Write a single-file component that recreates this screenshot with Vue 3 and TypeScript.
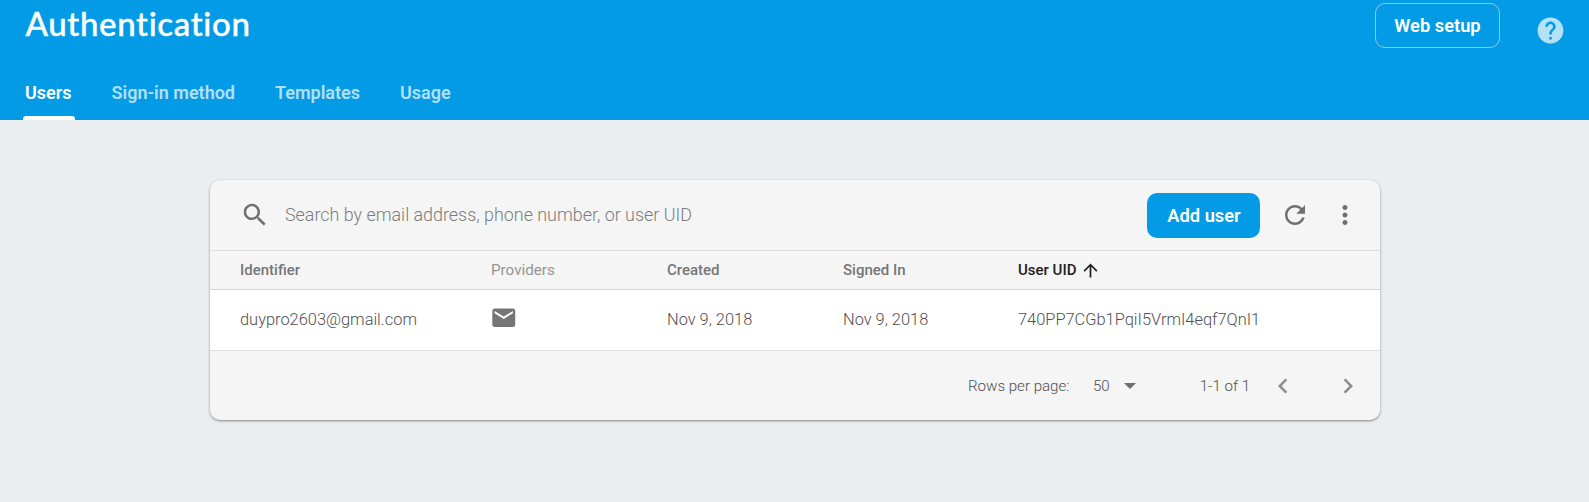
<script setup lang="ts">
import { ref } from 'vue'

interface Column {
  label: string
  state?: 'muted' | 'sorted'
}

interface UserRow {
  identifier: string
  created: string
  signedIn: string
  uid: string
}

const tabs: string[] = ['Users', 'Sign-in method', 'Templates', 'Usage']
const activeTab = ref('Users')

const columns: Column[] = [
  { label: 'Identifier' },
  { label: 'Providers', state: 'muted' },
  { label: 'Created' },
  { label: 'Signed In' },
  { label: 'User UID', state: 'sorted' },
]

const users: UserRow[] = [
  {
    identifier: 'duypro2603@gmail.com',
    created: 'Nov 9, 2018',
    signedIn: 'Nov 9, 2018',
    uid: '740PP7CGb1PqiI5VrmI4eqf7QnI1',
  },
]
</script>

<template>
  <div class="page">
    <header class="header">
      <div class="title-bar">
        <h1 class="title">Authentication</h1>
        <div class="header-actions">
          <button class="btn outline">Web setup</button>
          <svg class="help" viewBox="0 0 24 24">
            <path d="M12 2C6.48 2 2 6.48 2 12s4.48 10 10 10 10-4.48 10-10S17.52 2 12 2zm1 17h-2v-2h2v2zm2.07-7.75l-.9.92C13.45 12.9 13 13.5 13 15h-2v-.5c0-1.1.45-2.1 1.17-2.83l1.24-1.26c.37-.36.59-.86.59-1.41 0-1.1-.9-2-2-2s-2 .9-2 2H8c0-2.21 1.79-4 4-4s4 1.79 4 4c0 .88-.36 1.68-.93 2.25z" />
          </svg>
        </div>
      </div>
      <nav class="tabs">
        <a
          v-for="tab in tabs"
          :key="tab"
          class="tab"
          :class="{ active: tab === activeTab }"
          @click="activeTab = tab"
        >{{ tab }}</a>
      </nav>
    </header>

    <main class="card">
      <div class="toolbar">
        <svg class="icon" viewBox="0 0 24 24">
          <path d="M15.5 14h-.79l-.28-.27C15.41 12.59 16 11.11 16 9.5 16 5.91 13.09 3 9.5 3S3 5.91 3 9.5 5.91 16 9.5 16c1.61 0 3.09-.59 4.23-1.57l.27.28v.79l5 4.99L20.49 19l-4.99-5zm-6 0C7.01 14 5 11.99 5 9.5S7.01 5 9.5 5 14 7.01 14 9.5 11.99 14 9.5 14z" />
        </svg>
        <input class="search" placeholder="Search by email address, phone number, or user UID" />
        <button class="btn primary">Add user</button>
        <svg class="icon refresh" viewBox="0 0 24 24">
          <path d="M17.65 6.35C16.2 4.9 14.21 4 12 4c-4.42 0-7.99 3.58-7.99 8s3.57 8 7.99 8c3.73 0 6.84-2.55 7.73-6h-2.08c-.82 2.33-3.04 4-5.65 4-3.31 0-6-2.69-6-6s2.69-6 6-6c1.66 0 3.14.69 4.22 1.78L13 11h7V4l-2.35 2.35z" />
        </svg>
        <svg class="icon more" viewBox="0 0 24 24">
          <path d="M12 8c1.1 0 2-.9 2-2s-.9-2-2-2-2 .9-2 2 .9 2 2 2zm0 2c-1.1 0-2 .9-2 2s.9 2 2 2 2-.9 2-2-.9-2-2-2zm0 6c-1.1 0-2 .9-2 2s.9 2 2 2 2-.9 2-2-.9-2-2-2z" />
        </svg>
      </div>

      <div class="row head">
        <div v-for="col in columns" :key="col.label" class="th" :class="col.state">
          {{ col.label }}
          <svg v-if="col.state === 'sorted'" class="sort" viewBox="0 0 24 24">
            <path d="M4 12l1.41 1.41L11 7.83V20h2V7.83l5.58 5.59L20 12l-8-8-8 8z" />
          </svg>
        </div>
      </div>

      <div v-for="user in users" :key="user.uid" class="row body">
        <div class="id">{{ user.identifier }}</div>
        <div class="provider">
          <svg class="mail" viewBox="0 0 24 24">
            <path d="M20 4H4c-1.1 0-1.99.9-1.99 2L2 18c0 1.1.9 2 2 2h16c1.1 0 2-.9 2-2V6c0-1.1-.9-2-2-2zm0 4l-8 5-8-5V6l8 5 8-5v2z" />
          </svg>
        </div>
        <div>{{ user.created }}</div>
        <div>{{ user.signedIn }}</div>
        <div class="uid">{{ user.uid }}</div>
      </div>

      <footer class="footer">
        <span class="rows-label">Rows per page:</span>
        <span class="rows-size">50</span>
        <svg class="caret" viewBox="0 0 12 6"><path d="M0 0h12l-6 6z" /></svg>
        <span class="range">1-1 of 1</span>
        <svg class="icon chevron" viewBox="0 0 24 24">
          <path d="M15.41 7.41L14 6l-6 6 6 6 1.41-1.41L10.83 12z" />
        </svg>
        <svg class="icon chevron next" viewBox="0 0 24 24">
          <path d="M10 6L8.59 7.41 13.17 12l-4.58 4.59L10 18l6-6z" />
        </svg>
      </footer>
    </main>
  </div>
</template>

<style>
body {
  background: #eaeef1;
}
</style>

<style scoped>
.page {
  min-height: 502px;
  font-family: Roboto, 'Liberation Sans', sans-serif;
  background: #eaeef1;
  overflow: hidden;
}

.page * {
  box-sizing: border-box;
}

.header {
  height: 120px;
  background: #039be5;
  color: #fff;
  display: flex;
  flex-direction: column;
  justify-content: space-between;
}

.title-bar {
  display: flex;
  justify-content: space-between;
  padding: 0 23px 0 25.5px;
}

.title {
  margin: 3px 0 0;
  font: 500 33px/41px Lato, Roboto, sans-serif;
  letter-spacing: 0.65px;
  -webkit-text-stroke: 0.4px #fff;
}

.header-actions {
  display: flex;
  align-items: flex-start;
  padding-top: 3px;
}

.btn {
  height: 45px;
  padding: 1px 0 0 1px;
  border: 0;
  border-radius: 10px;
  font: 600 18.3px/44px Roboto, sans-serif;
  color: #fff;
  white-space: nowrap;
}

.outline {
  width: 125px;
  padding: 0;
  background: transparent;
  border: 1px solid rgba(255, 255, 255, 0.5);
  line-height: 43px;
}

.help {
  width: 31px;
  height: 31px;
  margin: 11.5px 0 0 35px;
  fill: rgba(255, 255, 255, 0.7);
}

.tabs {
  display: flex;
  gap: 36px;
  padding-left: 23px;
}

.tab {
  height: 55px;
  padding: 0 2px;
  border-bottom: 4px solid transparent;
  font-size: 18px;
  font-weight: 600;
  line-height: 55px;
  color: rgba(255, 255, 255, 0.7);
  position: relative;
}

.tab.active {
  color: #fff;
}

.tab.active::after {
  content: '';
  position: absolute;
  left: 0;
  right: -1px;
  bottom: -4px;
  height: 4px;
  background: #fff;
  border-radius: 3px 3px 0 0;
}

.card {
  width: 1170px;
  height: 240px;
  margin: 60px 0 0 210px;
  border-radius: 10px;
  background: #f5f5f5;
  overflow: hidden;
  box-shadow: 0 1px 3px rgba(0, 0, 0, 0.25), 0 1px 2px rgba(0, 0, 0, 0.22);
  color: #6c6c6c;
}

.toolbar {
  height: 71px;
  display: flex;
  align-items: center;
  padding: 0 20px 0 30px;
  border-bottom: 1px solid #dedede;
}

.icon {
  width: 30px;
  height: 30px;
  flex: none;
  fill: #6f6f6f;
}

.search {
  flex: 1;
  min-width: 0;
  margin-left: 15px;
  padding: 0;
  border: 0;
  outline: 0;
  background: transparent;
  font: 300 17.9px/24px Roboto, sans-serif;
}

.search::placeholder {
  color: #7c7c7c;
  opacity: 1;
}

.primary {
  width: 113px;
  background: #039be5;
}

.refresh {
  margin-left: 20px;
}

.more {
  margin-left: 20px;
}

.row {
  display: grid;
  grid-template-columns: 251px 176px 176px 175px 1fr;
  align-items: center;
  padding-left: 30px;
}

.head {
  height: 39px;
  border-bottom: 1px solid #d4d4d4;
  font-size: 15px;
  font-weight: 500;
  color: #757575;
}

.th {
  display: flex;
  align-items: center;
}

.muted {
  color: #949494;
  font-size: 15.2px;
  font-weight: 400;
}

.sorted {
  color: #212121;
}

.sort {
  width: 21px;
  height: 21px;
  margin-left: 4px;
  fill: #212121;
}

.body {
  height: 61px;
  padding-bottom: 2px;
  border-bottom: 1px solid #e0e0e0;
  background: #fff;
  font-size: 16.42px;
  font-weight: 300;
  color: #505050;
}

.mail {
  display: block;
  width: 27.5px;
  height: 27.5px;
  margin: -3px 0 0 -1.5px;
  fill: #757575;
}

.footer {
  height: 69px;
  display: flex;
  align-items: center;
  justify-content: flex-end;
  padding-right: 17.5px;
  font-size: 15.1px;
  font-weight: 300;
  color: #505050;
}

.rows-size {
  margin-left: 23.5px;
}

.caret {
  width: 12px;
  height: 6px;
  margin: 1px 64px 0 14px;
  fill: #6f6f6f;
}

.chevron {
  margin-left: 17.5px;
  fill: #8c8c8c;
}

.next {
  margin-left: 35px;
}
</style>
